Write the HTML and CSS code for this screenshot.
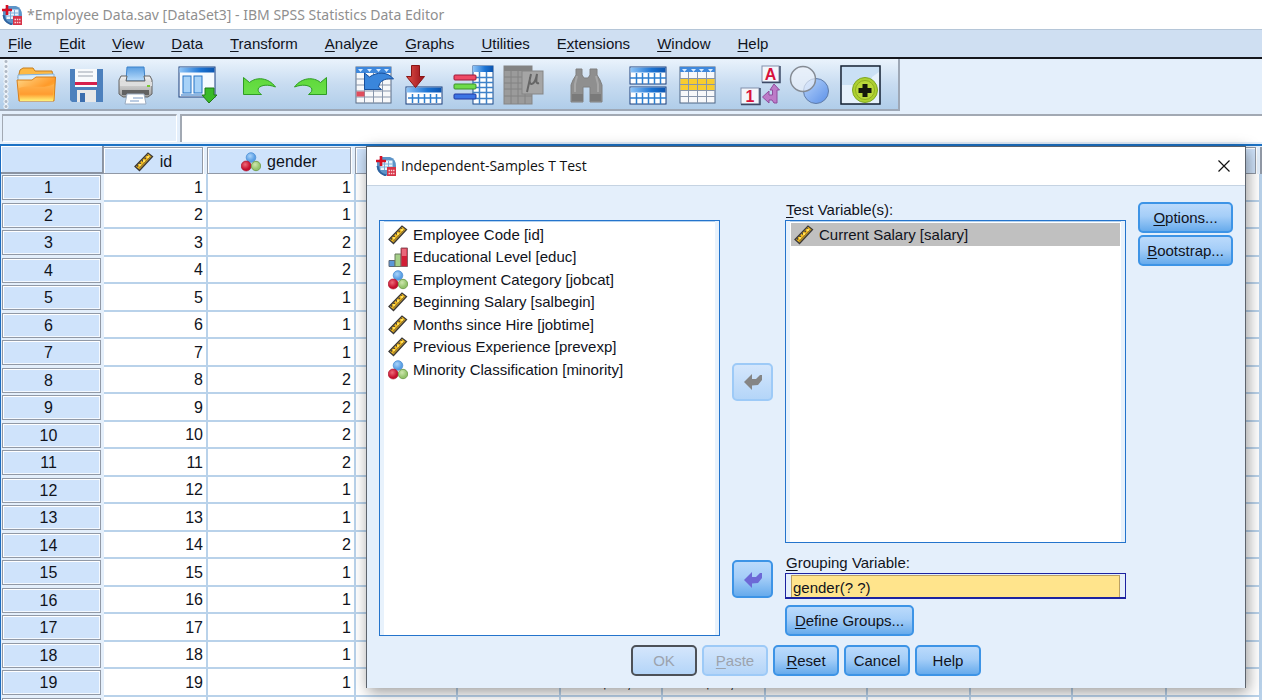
FILE: index.html
```html
<!DOCTYPE html>
<html lang="en">
<head>
<meta charset="utf-8">
<title>*Employee Data.sav [DataSet3] - IBM SPSS Statistics Data Editor</title>
<link rel="stylesheet" href="styles.css">
</head>
<body>
<svg class="defs" aria-hidden="true">
  <defs>
    <linearGradient id="g-blue" x1="0" x2="1"><stop offset="0" stop-color="#8ec4f7"/><stop offset=".6" stop-color="#1c74d4"/><stop offset="1" stop-color="#0c55b0"/></linearGradient>
    <linearGradient id="g-sky" x1="0" y1="0" x2="0" y2="1"><stop offset="0" stop-color="#5b9fe2"/><stop offset="1" stop-color="#b9dcfb"/></linearGradient>
    <linearGradient id="g-folder" x1="0" y1="0" x2="1" y2="1"><stop offset="0" stop-color="#ffd98a"/><stop offset=".55" stop-color="#ff9a2a"/><stop offset="1" stop-color="#ffe04a"/></linearGradient>
    <linearGradient id="g-folder2" x1="0" y1="0" x2="0" y2="1"><stop offset="0" stop-color="#ffb24e"/><stop offset=".6" stop-color="#ff9c30"/><stop offset="1" stop-color="#fff27a"/></linearGradient>
    <linearGradient id="g-green" x1="0" y1="0" x2="0" y2="1"><stop offset="0" stop-color="#5fd83a"/><stop offset="1" stop-color="#6ae04a"/></linearGradient>
    <linearGradient id="g-red" x1="0" x2="1"><stop offset="0" stop-color="#e05048"/><stop offset="1" stop-color="#98101a"/></linearGradient>
    <linearGradient id="g-metal" x1="0" y1="0" x2="0" y2="1"><stop offset="0" stop-color="#f2f2f2"/><stop offset="1" stop-color="#9d9d9d"/></linearGradient>
    <radialGradient id="b-red" cx=".4" cy=".35"><stop offset="0" stop-color="#ee6a78"/><stop offset="1" stop-color="#c40f2c"/></radialGradient>
    <radialGradient id="b-blue" cx=".4" cy=".35"><stop offset="0" stop-color="#a9d3fa"/><stop offset="1" stop-color="#5b9fe4"/></radialGradient>
    <radialGradient id="b-green" cx=".4" cy=".35"><stop offset="0" stop-color="#cfe6ae"/><stop offset="1" stop-color="#94c46c"/></radialGradient>
    <linearGradient id="g-set" x1="0" y1="0" x2="1" y2="1"><stop offset="0" stop-color="#b9d5fb"/><stop offset="1" stop-color="#5b90e8"/></linearGradient>
    <symbol id="scale" viewBox="0 0 20 20">
      <path d="M1 14.500 14 1l4.500 3.500L5.500 18.500z" fill="#f0b91e" stroke="#3a3838" stroke-width="1.300"/>
      <path d="M3 14.500 14 3.500" stroke="#4a4440" stroke-width="1.600" stroke-dasharray="1.600 2"/>
      <path d="M5 16.500 16.800 4.500" stroke="#6e5a34" stroke-width="1"/>
      <path d="M5 14h2v-2h-2zM9 10h2v-2h-2zM13 6h2v-2h-2z" fill="#ffdf5a"/>
    </symbol>
    <symbol id="nominal" viewBox="0 0 20 20">
      <circle cx="10" cy="5.500" r="4.800" fill="url(#b-blue)" stroke="#4c8fd4" stroke-width=".8"/>
      <circle cx="5.200" cy="14" r="5" fill="url(#b-red)" stroke="#a31028" stroke-width=".6"/>
      <circle cx="15" cy="14" r="4.700" fill="url(#b-green)" stroke="#719c4c" stroke-width=".9"/>
    </symbol>
    <symbol id="ordinal" viewBox="0 0 20 20">
      <path d="M1 13.500h6v6H1z" fill="#5c97d8" stroke="#5c6878"/>
      <path d="M7 7h6v12.500H7z" fill="#a5cf88" stroke="#69785c"/>
      <path d="M13 1h6.500v18.500H13z" fill="#d21e36" stroke="#8d6068"/>
      <path d="M14 2h4.500v7H14z" fill="#e8687a"/>
    </symbol>
    <symbol id="spss" viewBox="0 0 20 20">
      <path d="M6 1h8q6 2 6 9v9H8q-7-2-7-9V6z" fill="#5c94c8"/>
      <path d="M1.500 10q1 8 9 9.500" fill="none" stroke="#2f63a0" stroke-width="2"/>
      <rect x="4.500" y="4.500" width="12" height="9.500" fill="#eaf3fb"/>
      <path d="M4.500 8h12M4.500 11h12M8.500 5v9M12.500 5v9" stroke="#7aaedb"/>
      <path d="M5 0v10M0 5h10" stroke="#d60f24" stroke-width="2.600"/>
      <rect x="11" y="11" width="9" height="9" fill="#d63448"/>
      <path d="M12.500 14.500h6M12.500 17.500h6" stroke="#fbd5da" stroke-width="1.500" stroke-dasharray="1.500 .8"/>
    </symbol>
    <symbol id="move" viewBox="0 0 18 16">
      <path d="M0 8 8 0v5h4l4-4h2v5l-4 5-6 .500V16z" fill="currentColor"/>
    </symbol>
  </defs>
</svg>

<div class="app">
  <header class="titlebar">
    <svg class="app-icon" aria-hidden="true"><use href="#spss"/></svg>
    <h1 class="titlebar-text">*Employee Data.sav [DataSet3] - IBM SPSS Statistics Data Editor</h1>
  </header>

  <nav class="menubar">
    <button class="menu"><u>F</u>ile</button>
    <button class="menu"><u>E</u>dit</button>
    <button class="menu"><u>V</u>iew</button>
    <button class="menu"><u>D</u>ata</button>
    <button class="menu"><u>T</u>ransform</button>
    <button class="menu"><u>A</u>nalyze</button>
    <button class="menu"><u>G</u>raphs</button>
    <button class="menu"><u>U</u>tilities</button>
    <button class="menu">E<u>x</u>tensions</button>
    <button class="menu"><u>W</u>indow</button>
    <button class="menu"><u>H</u>elp</button>
  </nav>

  <div class="toolbar" role="toolbar" aria-label="Data Editor">
    <div class="tool-group">
      <button class="tool" aria-label="Open"><svg viewBox="11 61 50 48">
        <path d="M18 78l2-8 3-2h10l2 3h17l1 5v8z" fill="#fdb944" stroke="#c77f1e"/>
        <path d="M18 75l36-1v8H18z" fill="#d6ecfc" stroke="#83b4de"/>
        <path d="M17 80h15l4-3h19.500L54 101H19z" fill="url(#g-folder)" stroke="#d8801c"/>
        <path d="M19 88c12-4 24 2 35-4l-1 17H20z" fill="url(#g-folder2)"/>
      </svg></button>
      <button class="tool" aria-label="Save"><svg viewBox="11 61 50 48">
        <path d="M20 69h33v33H22l-2-2z" fill="#4c80bd"/>
        <path d="M25 69h22v18H25z" fill="#f8fafc"/><path d="M28 72h15M28 76h15" stroke="#b9c0c8" stroke-width="1.500"/>
        <path d="M25 82h22v3H25z" fill="#d61f4c"/>
        <path d="M27 90h19v12H27z" fill="#e8e8e8"/><path d="M30 93h5v9h-5z" fill="#3c6eae"/>
      </svg></button>
      <button class="tool" aria-label="Print"><svg viewBox="111 61 50 48">
        <path d="M127 67h17l1 14h-19z" fill="url(#g-sky)" stroke="#3c83cb"/>
        <path d="M121 76h6l-1 5h19l-1-5h6l2 4v14l-4 3h-25l-4-3V80z" fill="url(#g-metal)" stroke="#636363"/>
        <path d="M120 82h32v4h-32z" fill="#dedede"/><path d="M122 90h27v5h-27z" fill="#626262"/>
        <path d="M127 94h17l2 10h-21z" fill="#fff" stroke="#9aabc0"/><path d="M133 98h10M130 101h9" stroke="#7899c4"/>
        <path d="M147 86h3" stroke="#78c832" stroke-width="2"/>
      </svg></button>
    </div>
    <div class="tool-group">
      <button class="tool" aria-label="Recall recently used dialogs"><svg viewBox="173 61 50 48">
        <rect x="179" y="67" width="36" height="30" fill="#f6faff" stroke="#1a3f7c"/>
        <rect x="179.500" y="67.500" width="35" height="5" fill="url(#g-blue)"/>
        <rect x="183" y="76" width="8" height="17" fill="#a7d2f8" stroke="#2472c4"/><rect x="194" y="76" width="8" height="17" fill="#a7d2f8" stroke="#2472c4"/>
        <path d="M181 95h21" stroke="#2472c4"/>
        <path d="M205 88h9v7h3l-8 8-7-8h3z" fill="#3aba28" stroke="#22781a"/>
      </svg></button>
    </div>
    <div class="tool-group">
      <button class="tool" aria-label="Undo"><svg viewBox="235 61 50 48">
        <path d="M243.500 77.500l6 5c7-6 19-5 26 4.500-8-3-14-2-17 1-1 3 0 4 3 6.500h-18z" fill="url(#g-green)" stroke="#2e9c24"/>
      </svg></button>
      <button class="tool" aria-label="Redo"><svg viewBox="285 61 50 48">
        <path d="M326.500 77.500l-6 5c-7-6-19-5-26 4.500 8-3 14-2 17 1 1 3 0 4-3 6.500h18z" fill="url(#g-green)" stroke="#2e9c24"/>
      </svg></button>
    </div>
    <div class="tool-group tool-group-wide">
      <button class="tool" aria-label="Go to case"><svg viewBox="349 61 50 48">
        <rect x="356" y="67" width="35" height="36" fill="#f7f8fa" stroke="#5b6c85"/>
        <rect x="356" y="67" width="35" height="6" fill="#3f88dc"/>
        <path d="M358 69h5l-2.500 3zM367 69h5l-2.500 3zM376 69h5l-2.500 3zM384 69h5l-2.500 3z" fill="#d9ecff"/>
        <path d="M356 79h35M356 85h35M356 91h35M356 97h35M364.500 73v30M373.500 73v30M382.500 73v30" stroke="#8795ab"/>
        <rect x="356.500" y="91.500" width="8" height="5" fill="#e04c5c"/>
        <path d="M364.500 73l5 4c7-5 18-6 24 2-7-1-12 1-14 5l-1 3 3 2.500h-17z" fill="#3a86dc" stroke="#174f9c"/>
      </svg></button>
      <button class="tool" aria-label="Go to variable"><svg viewBox="399 61 50 48">
        <rect x="406" y="87" width="36" height="17" fill="#fff" stroke="#1a3f7c"/>
        <rect x="406.500" y="87.500" width="35" height="5" fill="url(#g-blue)"/>
        <path d="M408 98h33M412.500 94v9M418.500 94v9M424.500 94v9M430.500 94v9M436.500 94v9" stroke="#2d7fd0" stroke-width="1.500"/>
        <path d="M411.500 65.500h8v11h5l-9 11-9-11h5z" fill="url(#g-red)" stroke="#8a1414"/>
      </svg></button>
      <button class="tool" aria-label="Variables"><svg viewBox="449 61 50 48">
        <rect x="473" y="66" width="20" height="38" fill="#fff" stroke="#1a4a8c"/>
        <rect x="473" y="66" width="20" height="6" fill="url(#g-blue)"/>
        <path d="M473 77.500h20M473 82.500h20M473 87.500h20M473 92.500h20M473 98.500h20M479.500 72v32M486.500 72v32" stroke="#3f83c9" stroke-width="1.500"/>
        <rect x="454" y="75" width="22" height="5" rx="1" fill="#ee4a66" stroke="#9c1838"/>
        <rect x="454" y="84" width="22" height="5" rx="1" fill="#6fdc4a" stroke="#3d8f2c"/>
        <rect x="454" y="94" width="22" height="5" rx="1" fill="#3c74e4" stroke="#2338a0"/>
      </svg></button>
      <button class="tool" aria-label="Run descriptive statistics" disabled><svg viewBox="499 61 50 48">
        <rect x="504" y="66" width="28" height="38" fill="#9b9b9b" stroke="#858585"/><rect x="504" y="66" width="28" height="5" fill="#838383"/>
        <path d="M504 77h28M504 83h28M504 89h28M504 96h28M511 71v33M518 71v33M525 71v33" stroke="#828282"/>
        <rect x="522" y="71" width="21" height="23" fill="#a5a5a5" stroke="#858585"/>
        <path d="M531 74l-4 18M530 78c-2 9 5 8 7-4-1 8-1 10 2 9" fill="none" stroke="#666" stroke-width="2"/>
      </svg></button>
    </div>
    <div class="tool-group">
      <button class="tool" aria-label="Find" disabled><svg viewBox="561 61 50 48">
        <path d="M576 69h6v6l2 3h4l2-3v-6h7v6l3 5 2 5v17h-12V87h-7v15h-12V85l2-5 3-5z" fill="#8f8f8f" stroke="#808080"/>
        <path d="M577 76l-2 8v8M596 76l2 8v8" fill="none" stroke="#a6a6a6" stroke-width="2"/><path d="M572 94h11v7h-11zM590 94h11v7h-11z" fill="#7a7a7a"/>
      </svg></button>
    </div>
    <div class="tool-group tool-group-mid">
      <button class="tool" aria-label="Split file"><svg viewBox="625 61 50 48">
        <rect x="631" y="67" width="36" height="17" fill="#fff" stroke="#1a3f7c"/><rect x="631.500" y="67.500" width="35" height="5" fill="url(#g-blue)"/>
        <path d="M631 78h36M637.500 73v11M643.500 73v11M649.500 73v11M655.500 73v11M661.500 73v11" stroke="#2d7fd0" stroke-width="1.500"/>
        <rect x="631" y="87" width="36" height="17" fill="#fff" stroke="#1a3f7c"/><rect x="631.500" y="87.500" width="35" height="5" fill="url(#g-blue)"/>
        <path d="M631 98h36M637.500 93v11M643.500 93v11M649.500 93v11M655.500 93v11M661.500 93v11" stroke="#2d7fd0" stroke-width="1.500"/>
      </svg></button>
      <button class="tool" aria-label="Select cases"><svg viewBox="674 61 50 48">
        <rect x="680" y="67" width="35" height="36" fill="#f7f8fa" stroke="#4e6686"/><rect x="680" y="67" width="35" height="5" fill="#3f88dc"/>
        <path d="M682 69h5l-2.500 3zM691 69h5l-2.500 3zM699 69h5l-2.500 3zM708 69h5l-2.500 3z" fill="#d9ecff"/>
        <rect x="680.500" y="79" width="34" height="11" fill="#f8cc2e"/>
        <path d="M680 78.500h35M680 84.500h35M680 90.500h35M680 96.500h35M688.500 72v31M697.500 72v31M706.500 72v31" stroke="#8795ab"/>
      </svg></button>
    </div>
    <div class="tool-group tool-group-mid">
      <button class="tool" aria-label="Value labels"><svg viewBox="737 61 50 48">
        <rect x="763" y="66" width="17" height="16" fill="#f4f6fb" stroke="#8290ac"/><path d="M763 82.500h18V66" fill="none" stroke="#3d4a66" stroke-width="1.500"/>
        <text x="771.500" y="80" class="tool-letter">A</text>
        <rect x="742" y="88" width="18" height="16" fill="#f4f6fb" stroke="#8290ac"/><path d="M742 104.500h19V88" fill="none" stroke="#3d4a66" stroke-width="1.500"/>
        <text x="751" y="102" class="tool-letter">1</text>
        <path d="M775 84l-4 6h2.500v5H770v-4l-6.500 6 6.500 6v-3h3l2 3h3V90h2.500z" fill="#bd7ac8" stroke="#8e4c9c"/>
      </svg></button>
      <button class="tool" aria-label="Use variable sets"><svg viewBox="787 61 50 48">
        <circle cx="817" cy="91" r="12.500" fill="url(#g-set)" stroke="#5f7ca8"/>
        <circle cx="804" cy="79" r="12.500" fill="#eef3fa" fill-opacity=".65" stroke="#858b94" stroke-width="1.500"/>
      </svg></button>
      <button class="tool" aria-label="Customize toolbar"><svg viewBox="837 61 50 48">
        <rect x="842" y="66" width="39" height="38" fill="#e6f1fc" stroke="#111e30" stroke-width="1.500"/>
        <path d="M843 67h37v5l-7 5v8h-30z" fill="#c3dcf2" opacity=".8"/>
        <circle cx="866" cy="90" r="12.500" fill="#add02f" stroke="#7ea622"/><circle cx="866" cy="90" r="9.500" fill="#b9d83a" stroke="#8fae20"/>
        <path d="M866 84v13M859.500 90.500h13" stroke="#15180c" stroke-width="5"/>
      </svg></button>
    </div>
  </div>

  <div class="cellbar">
    <input class="cell-name" aria-label="Cell" readonly>
    <input class="cell-value" aria-label="Cell value">
  </div>

  <main class="sheet">
    <table class="grid">
      <colgroup><col class="c-row"><col class="c-id"><col class="c-gender"><col class="c"><col class="c-wide"><col class="c"><col class="c-wide"><col class="c"><col class="c-wide"><col class="c"><col class="c-small"><col class="c-small"><col></colgroup>
      <thead><tr>
        <th class="corner"></th>
        <th><span class="head"><svg class="var-icon"><use href="#scale"/></svg>id</span></th>
        <th><span class="head"><svg class="var-icon"><use href="#nominal"/></svg>gender</span></th>
        <th><span class="head"></span></th><th><span class="head"></span></th><th><span class="head"></span></th><th><span class="head"></span></th><th><span class="head"></span></th><th><span class="head"></span></th><th><span class="head"></span></th><th><span class="head"></span></th><th><span class="head"></span></th><th><span class="head"></span></th>
      </tr></thead>
      <tbody id="rows"></tbody>
    </table>
  </main>

  <section class="dialog" role="dialog" aria-labelledby="dialog-title">
    <header class="dialog-bar">
      <svg class="app-icon" aria-hidden="true"><use href="#spss"/></svg>
      <h2 class="dialog-title" id="dialog-title">Independent-Samples T Test</h2>
      <button class="close" aria-label="Close"><svg viewBox="0 0 12 12"><path d="M.5.5l11 11M11.500.5l-11 11" stroke="#111" stroke-width="1.200"/></svg></button>
    </header>
    <div class="dialog-body">
      <ul class="list source">
        <li class="item"><svg class="var-icon"><use href="#scale"/></svg>Employee Code [id]</li>
        <li class="item"><svg class="var-icon"><use href="#ordinal"/></svg>Educational Level [educ]</li>
        <li class="item"><svg class="var-icon"><use href="#nominal"/></svg>Employment Category [jobcat]</li>
        <li class="item"><svg class="var-icon"><use href="#scale"/></svg>Beginning Salary [salbegin]</li>
        <li class="item"><svg class="var-icon"><use href="#scale"/></svg>Months since Hire [jobtime]</li>
        <li class="item"><svg class="var-icon"><use href="#scale"/></svg>Previous Experience [prevexp]</li>
        <li class="item"><svg class="var-icon"><use href="#nominal"/></svg>Minority Classification [minority]</li>
      </ul>
      <button class="btn move move-test" aria-label="Move test variable" disabled><svg><use href="#move"/></svg></button>
      <button class="btn move move-group" aria-label="Move grouping variable"><svg><use href="#move"/></svg></button>
      <div class="label test-label" id="test-label"><u>T</u>est Variable(s):</div>
      <ul class="list target" aria-labelledby="test-label">
        <li class="item selected"><svg class="var-icon"><use href="#scale"/></svg>Current Salary [salary]</li>
      </ul>
      <div class="grouping">
        <label class="label" for="grouping"><u>G</u>rouping Variable:</label>
        <div class="group-box"><input class="group-input" id="grouping" value="gender(? ?)"></div>
        <button class="btn define"><u>D</u>efine Groups...</button>
      </div>
      <div class="side">
        <button class="btn"><u>O</u>ptions...</button>
        <button class="btn"><u>B</u>ootstrap...</button>
      </div>
    </div>
    <footer class="dialog-foot">
      <button class="btn foot default" disabled>OK</button>
      <button class="btn foot" disabled><u>P</u>aste</button>
      <button class="btn foot"><u>R</u>eset</button>
      <button class="btn foot">Cancel</button>
      <button class="btn foot">Help</button>
    </footer>
  </section>
</div>
<script src="rows.js"></script>
</body>
</html>
```
FILE: rows.js
```js
const gender = [1, 1, 2, 2, 1, 1, 1, 2, 2, 2, 2, 1, 1, 2, 1, 1, 1, 1, 1];
const more = { 19: ["12", "1", "$42,300", "$14,250", "98", "103"] };
const body = document.getElementById("rows");

for (let n = 1; n <= 20; n++) {
  const filled = n <= gender.length;
  const row = body.insertRow();
  const head = document.createElement("th");
  head.className = "rowhead";
  head.innerHTML = `<span class="head">${filled ? n : ""}</span>`;
  row.append(head);
  const values = filled ? [n, gender[n - 1], ...(more[n] || [])] : [];
  for (let c = 0; c < 12; c++) row.insertCell().textContent = values[c] ?? "";
}
```
FILE: styles.css
```css
* { box-sizing: border-box; }
body { margin: 0; font: 16px/20px "Liberation Sans", Arial, sans-serif; color: #10131c; background: #fff; }
button, input { font: inherit; color: inherit; margin: 0; padding: 0; border: 0; background: none; }
u { text-underline-offset: 2px; }
h1, h2 { margin: 0; font-weight: 400; }
.defs { position: absolute; width: 0; height: 0; }

.app { position: relative; height: 100vh; overflow: hidden; display: flex; flex-direction: column; background: #e4effb; }

.titlebar { display: flex; align-items: center; gap: 5px; height: 29px; padding-left: 2px; background: #fff; flex: none; }
.app-icon { width: 20px; height: 20px; flex: none; }
.titlebar-text { font: 14px/20px "Noto Sans", "Open Sans", sans-serif; color: #8f8f8f; white-space: nowrap; }

.menubar { display: flex; gap: 27px; height: 30px; padding-left: 8px; font-size: 15px; background: #cfdff2; border-top: 1px solid #b5c6d8; border-bottom: 2px solid #14161c; flex: none; }

.toolbar { display: flex; gap: 12px; align-self: flex-start; height: 52px; padding: 2px 12px 0 11px; flex: none;
  background: radial-gradient(circle, #b0bac6 1px, #f2f7fc 2px, transparent 3px) 3px 0 / 6px 5px repeat-y, linear-gradient(#eaf3fc, #c8dcf1 50%, #b0cde9); border-right: 2px solid #9ea8b6; border-bottom: 2px solid #9ea8b6; }
.tool-group { display: flex; }
.tool-group-wide { margin-left: 2px; }
.tool-group-mid { margin-left: 1px; }
.tool-group-mid + .tool-group-mid { margin-left: 0; }
.tool { width: 50px; height: 48px; }
.tool svg { display: block; width: 50px; height: 48px; }
.tool-letter { font: bold 16px "Liberation Sans", sans-serif; fill: #d8123c; text-anchor: middle; }

.cellbar { display: flex; gap: 3px; height: 33px; padding: 3px 0 2px 2px; flex: none; }
.cell-name { width: 175px; background: #e4effb; border: 1px solid #a2a9b3; border-width: 2px 1px 1px 1px; border-right-color: #fff; border-bottom-color: #fff; }
.cell-value { flex: 1; background: #fff; border: solid #a2a9b3; border-width: 2px 0 0 2px; }

.sheet { flex: 1; min-height: 0; overflow: hidden; border-top: 2px solid #1c72c4; border-left: 1px solid #1c6cc0; background: #e4effb; }
.grid { width: 100%; table-layout: fixed; border-collapse: separate; border-spacing: 0; }
.c-row { width: 103px; }
.c-id { width: 104px; }
.c-gender { width: 148px; }
.c { width: 102px; }
.c-wide { width: 103px; }
.c-small { width: 94px; }
.grid th { height: 27px; padding: 0; font-weight: 400; vertical-align: top; }
.head { display: flex; align-items: center; justify-content: center; gap: 6px; height: 27px; margin: 1px 5px 0 -1px; padding-top: 3px;
  background: #cfe3fb; border: 1px solid #9199a6; box-shadow: inset 1px 1px #fff, 1px 1px #fff; }
.grid .corner { background: #cfe3fb; border: solid #8a93a2; border-width: 0 2px 2px 0; box-shadow: inset 1px 1px #fff; }
.grid td { height: 27px; padding: 1px 3px 0 0; text-align: right; background: #fff; border: solid #b9d2ea; border-width: 0 2px 2px 0; line-height: 20px; }
.grid tbody tr:nth-child(odd) > * { height: 28px; }
.rowhead { background: #e4effb; }
.rowhead .head { height: 25px; margin: 1px 3px 0 1px; padding: 1px 6px 0 0; box-shadow: inset 1px 1px #fff, inset -1px -1px #f4f9ff; }

.dialog { position: absolute; top: 146px; left: 366px; right: 16px; border: solid #5c636c; border-width: 1px 1px 0; background: #e4effb; box-shadow: 2px 4px 14px rgba(0, 0, 0, .4); }
.dialog-bar { display: flex; align-items: center; gap: 5px; height: 39px; padding: 0 15px 0 9px; background: #fff; border-bottom: 1px solid #c5d3e2; }
.dialog-title { flex: 1; font: 14px/20px "Open Sans", "Noto Sans", sans-serif; color: #111; }
.close { width: 12px; height: 12px; }
.close svg { display: block; }

.dialog-body { display: grid; grid-template-columns: 1fr 41px 1fr 95px; grid-template-rows: 19px 323px auto; column-gap: 12px; padding: 15px 12px 0; font-size: 15px; }
.list { list-style: none; margin: 0; padding: 2px 5px; background: #fff; border: 1px solid #2474cc; box-shadow: inset 4px 0 #e8f2fc, inset -4px 0 #e8f2fc, inset 0 1px #b4d2f0; }
.source { grid-area: 2 / 1 / 4 / 2; }
.target { grid-area: 2 / 3; }
.item { display: flex; align-items: center; gap: 5px; height: 23px; padding-left: 3px; white-space: nowrap; }
.item:nth-child(even) { height: 22px; }
.var-icon { width: 20px; height: 20px; flex: none; }
.selected { background: #c0c0c0; }
.label { display: block; height: 19px; line-height: 17px; padding-left: 1px; }
.test-label { grid-area: 1 / 3; }
.grouping { grid-area: 3 / 3; padding-top: 11px; }
.group-box { height: 26px; padding: 1px 5px; background: #e4effb; border: 2px solid #1c22a0; border-width: 1px 1px 2px; }
.group-input { display: block; width: 100%; height: 22px; background: #ffe48c; border: solid #b99f63; border-width: 1px 1px 0 1px; padding: 1px 0 0 1px; }
.define { width: 129px; margin-top: 6px; }
.side { grid-area: 1 / 4 / 4 / 5; display: flex; flex-direction: column; gap: 2px; padding-top: 1px; }

.btn { display: inline-flex; align-items: center; justify-content: center; height: 31px; padding-top: 1px; white-space: pre; font-size: 15px;
  border: 2px solid #3d94e6; border-radius: 5px; background: linear-gradient(#bbdafb, #a5cef8 45%, #67abec); }
.btn:disabled { color: #9ca3ad; border-color: #9dcaf7; background: linear-gradient(#d4e6fc, #b4d5f8); }
.move { width: 41px; height: 38px; color: #6d69d6; }
.move:disabled { color: #858585; }
.move svg { width: 18px; height: 16px; }
.move-test { grid-area: 2 / 2; align-self: center; }
.move-group { grid-area: 3 / 2; margin-top: 17px; }
.dialog-foot { display: flex; justify-content: center; gap: 5px; padding: 9px 0 12px; }
.foot { width: 66px; }
.default:disabled { border-color: #4c5158; }
```
